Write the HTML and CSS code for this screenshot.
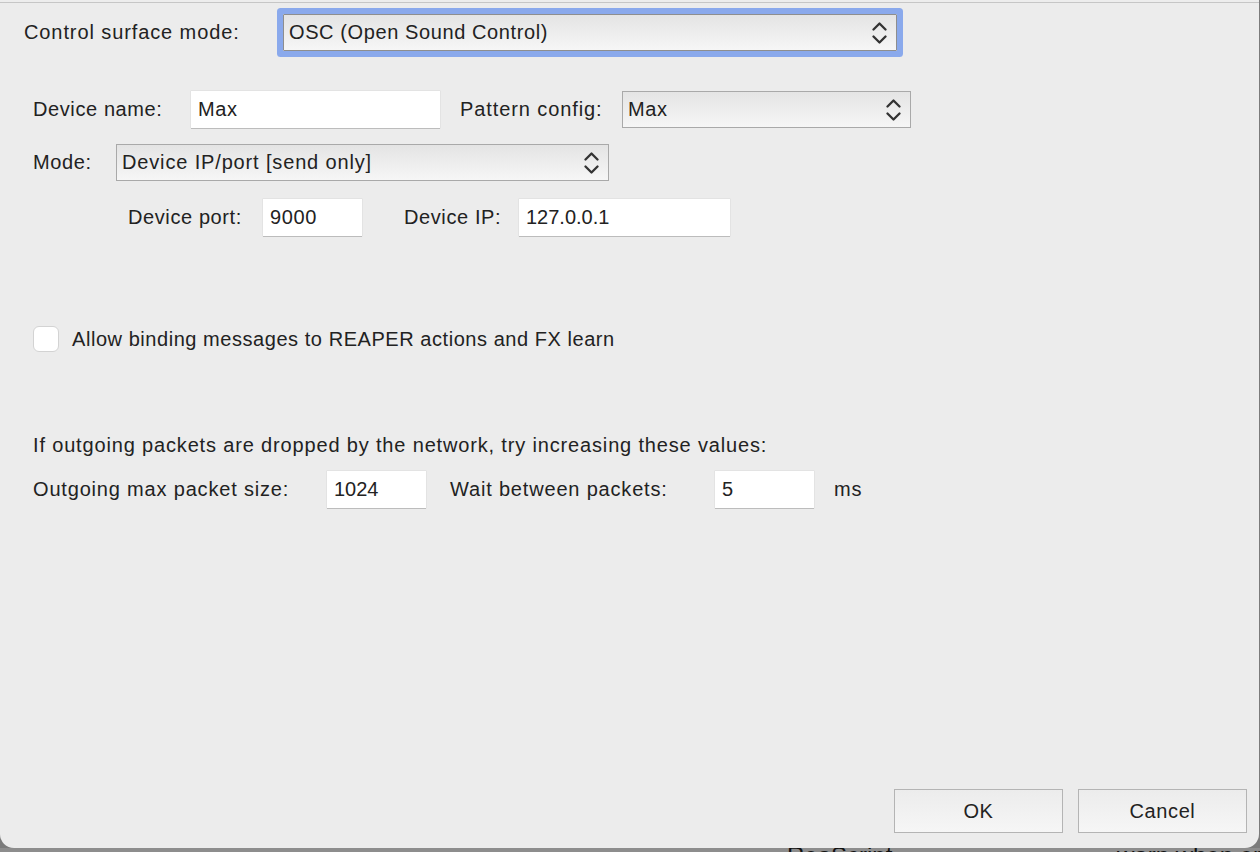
FILE: index.html
```html
<!DOCTYPE html>
<html>
<head>
<meta charset="utf-8">
<link rel="stylesheet" href="styles.css">
</head>
<body>
<div class="window">
  <div class="topline"></div>
  <div class="form">
    <div class="row row-csm">
      <span class="label label-wide w-csm">Control surface mode:</span>
      <div class="select select-focus w-csm-sel">
        <span class="sel-text">OSC (Open Sound Control)</span>
        <svg class="chev" width="15" height="22" viewBox="0 0 15 22"><polyline points="1.5,7.5 7.5,1.5 13.5,7.5" /><polyline points="1.5,14.5 7.5,20.5 13.5,14.5" /></svg>
      </div>
    </div>

    <div class="row row-name">
      <span class="label w-name">Device name:</span>
      <div class="input w-name-in">Max</div>
      <span class="label label-wide w-pat">Pattern config:</span>
      <div class="select w-pat-sel">
        <span class="sel-text">Max</span>
        <svg class="chev" width="15" height="22" viewBox="0 0 15 22"><polyline points="1.5,7.5 7.5,1.5 13.5,7.5" /><polyline points="1.5,14.5 7.5,20.5 13.5,14.5" /></svg>
      </div>
    </div>

    <div class="row row-mode">
      <span class="label w-mode">Mode:</span>
      <div class="select w-mode-sel">
        <span class="sel-text sel-wide">Device IP/port [send only]</span>
        <svg class="chev" width="15" height="22" viewBox="0 0 15 22"><polyline points="1.5,7.5 7.5,1.5 13.5,7.5" /><polyline points="1.5,14.5 7.5,20.5 13.5,14.5" /></svg>
      </div>
    </div>

    <div class="row row-port">
      <span class="label w-port">Device port:</span>
      <div class="input w-port-in">9000</div>
      <span class="label w-ip">Device IP:</span>
      <div class="input input2 w-ip-in">127.0.0.1</div>
    </div>

    <div class="row row-check">
      <span class="checkbox"></span>
      <span class="label label-check">Allow binding messages to REAPER actions and FX learn</span>
    </div>

    <div class="note">If outgoing packets are dropped by the network, try increasing these values:</div>

    <div class="row row-packets">
      <span class="label2 w-max">Outgoing max packet size:</span>
      <div class="input input2 w-small">1024</div>
      <span class="label2 w-wait">Wait between packets:</span>
      <div class="input input2 w-small">5</div>
      <span class="label2 ms">ms</span>
    </div>
  </div>

  <div class="buttons">
    <div class="button">OK</div>
    <div class="button">Cancel</div>
  </div>
</div>
<div class="behind">
  <span class="b1">ReaScript</span>
  <span class="b2">warn when errors</span>
</div>
</body>
</html>
```

FILE: styles.css
```css
* { box-sizing: border-box; }
html, body {
  margin: 0;
  padding: 0;
}
body {
  width: 1260px;
  height: 852px;
  overflow: hidden;
  background: #7b7b7b;
  font-family: "Liberation Sans", Arial, sans-serif;
  font-size: 20px;
  color: #222;
}
.window {
  position: relative;
  z-index: 1;
  width: 1259px;
  height: 848px;
  background: #ececec;
  border-radius: 0 0 14px 14px;
  display: flex;
  flex-direction: column;
}
.topline {
  height: 3px;
  background: #ededed;
  border-bottom: 1px solid #c6c6c6;
}
.form {
  display: flex;
  flex-direction: column;
  padding-left: 33px;
}
.row {
  display: flex;
  align-items: center;
}
.label {
  letter-spacing: 0.6px;
  white-space: nowrap;
}
.label-wide { letter-spacing: 0.9px; }
.label-check { letter-spacing: 0.55px; }
.row-csm { margin-top: 11px; margin-left: -9px; height: 37px; }
.w-csm { width: 259px; }
.w-csm-sel { width: 614px; }

.row-name { margin-top: 40px; height: 37px; }
.w-name { width: 158px; }
.w-name-in { width: 249px; margin-right: 20px; }
.w-pat { width: 162px; }
.w-pat-sel { width: 289px; }

.row-mode { margin-top: 16px; height: 37px; }
.w-mode { width: 83px; }
.w-mode-sel { width: 493px; }

.row-port { margin-top: 18px; height: 37px; padding-left: 95px; }
.w-port { width: 135px; }
.w-port-in { width: 99px; margin-right: 42px; }
.w-ip { width: 115px; }
.w-ip-in { width: 211px; }

.row-check { margin-top: 90px; height: 26px; }

.note {
  margin-top: 77px;
  height: 32px;
  line-height: 32px;
  white-space: nowrap;
  letter-spacing: 0.84px;
}
.label2 { white-space: nowrap; letter-spacing: 0.82px; }
.row-packets { margin-top: 10px; height: 37px; }
.w-max { width: 294px; }
.w-small { width: 99px; }
.w-wait { width: 265px; margin-left: 24px; }
.ms { margin-left: 20px; }

.select {
  position: relative;
  height: 37px;
  border: 1.5px solid #a9a9a9;
  background: linear-gradient(#e4e4e4, #f6f6f6);
  display: flex;
  align-items: center;
  padding-left: 5px;
  letter-spacing: 0.6px;
}
.select-focus {
  border-color: #8e8e8e;
  box-shadow: 0 0 0 6px #8aa9ec;
  border-radius: 1px;
}
.sel-text { flex: 1; white-space: nowrap; }
.sel-wide { letter-spacing: 0.85px; }
.chev {
  margin-right: 9px;
  fill: none;
  stroke: #333;
  stroke-width: 2.3;
  stroke-linecap: round;
  stroke-linejoin: round;
}
.input {
  height: 37px;
  background: #fff;
  box-shadow: 0 1px 0 #bcbcbc, 0 0 0 0.5px #dadada;
  display: flex;
  align-items: center;
  padding-left: 7px;
  letter-spacing: 0.6px;
}
.input2 { letter-spacing: 0; }
.checkbox {
  width: 26px;
  height: 26px;
  border-radius: 6px;
  background: #fff;
  border: 1px solid #d3d3d3;
  margin-right: 13px;
}
.buttons {
  margin-top: auto;
  margin-bottom: 15px;
  display: flex;
  justify-content: flex-end;
  gap: 15px;
  padding-right: 12px;
}
.button {
  width: 169px;
  height: 44px;
  border: 1.5px solid #b4b4b4;
  background: linear-gradient(#ececec, #f6f6f6);
  display: flex;
  align-items: center;
  justify-content: center;
  letter-spacing: 0.6px;
}
.behind {
  position: relative;
  height: 4px;
  overflow: hidden;
  background: #8d8d8d;
  color: #111;
  font-size: 24px;
  line-height: 1;
}
.behind span {
  position: absolute;
  top: -4px;
  white-space: nowrap;
}
.b1 { left: 787px; }
.b2 { left: 1117px; }
```
